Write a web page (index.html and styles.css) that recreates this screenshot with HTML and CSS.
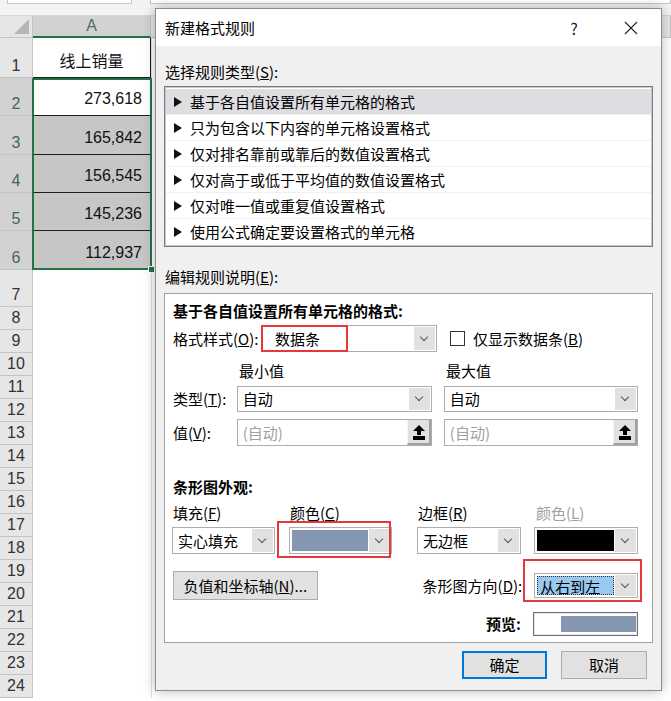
FILE: index.html
```html
<!DOCTYPE html>
<html lang="zh-CN">
<head>
  <meta charset="UTF-8" />
  <title>新建格式规则</title>
  <link rel="stylesheet" href="styles.css">
</head>
<body>
  <div class="sheet">
    <div class="topbar">
      <span class="namebox"></span>
      <span class="formula"></span>
    </div>

    <div class="grid">
      <div class="corner"><span class="corner-tri"></span></div>
      <div class="col-head active">A</div>
      <div class="col-head"></div>

      <div class="row-head">1</div><div class="cell a head-cell">线上销量</div><div class="cell b"></div>
      <div class="row-head sel">2</div><div class="cell a num">273,618</div><div class="cell b"></div>
      <div class="row-head sel">3</div><div class="cell a num shade">165,842</div><div class="cell b"></div>
      <div class="row-head sel">4</div><div class="cell a num shade">156,545</div><div class="cell b"></div>
      <div class="row-head sel">5</div><div class="cell a num shade">145,236</div><div class="cell b"></div>
      <div class="row-head sel">6</div><div class="cell a num shade">112,937</div><div class="cell b"></div>
      <div class="row-head">7</div><div class="cell"></div><div class="cell b"></div>
      <div class="row-head">8</div><div class="cell"></div><div class="cell b"></div>
      <div class="row-head">9</div><div class="cell"></div><div class="cell b"></div>
      <div class="row-head">10</div><div class="cell"></div><div class="cell b"></div>
      <div class="row-head">11</div><div class="cell"></div><div class="cell b"></div>
      <div class="row-head">12</div><div class="cell"></div><div class="cell b"></div>
      <div class="row-head">13</div><div class="cell"></div><div class="cell b"></div>
      <div class="row-head">14</div><div class="cell"></div><div class="cell b"></div>
      <div class="row-head">15</div><div class="cell"></div><div class="cell b"></div>
      <div class="row-head">16</div><div class="cell"></div><div class="cell b"></div>
      <div class="row-head">17</div><div class="cell"></div><div class="cell b"></div>
      <div class="row-head">18</div><div class="cell"></div><div class="cell b"></div>
      <div class="row-head">19</div><div class="cell"></div><div class="cell b"></div>
      <div class="row-head">20</div><div class="cell"></div><div class="cell b"></div>
      <div class="row-head">21</div><div class="cell"></div><div class="cell b"></div>
      <div class="row-head">22</div><div class="cell"></div><div class="cell b"></div>
      <div class="row-head">23</div><div class="cell"></div><div class="cell b"></div>
      <div class="row-head">24</div><div class="cell"></div><div class="cell b"></div>

      <div class="selection"><span class="fill-handle"></span></div>
    </div>
  </div>

  <div class="dialog">
    <div class="titlebar">
      <span class="title">新建格式规则</span>
      <span class="title-btn help">?</span>
      <span class="title-btn close">
        <svg width="14" height="14" viewBox="0 0 14 14"><path d="M1 1 L13 13 M13 1 L1 13" stroke="#222" stroke-width="1.1" fill="none"/></svg>
      </span>
    </div>

    <div class="body">
      <div class="section-label">选择规则类型(<u>S</u>):</div>
      <div class="rule-list">
        <div class="rule-item current"><span class="tri"></span>基于各自值设置所有单元格的格式</div>
        <div class="rule-item"><span class="tri"></span>只为包含以下内容的单元格设置格式</div>
        <div class="rule-item"><span class="tri"></span>仅对排名靠前或靠后的数值设置格式</div>
        <div class="rule-item"><span class="tri"></span>仅对高于或低于平均值的数值设置格式</div>
        <div class="rule-item"><span class="tri"></span>仅对唯一值或重复值设置格式</div>
        <div class="rule-item last"><span class="tri"></span>使用公式确定要设置格式的单元格</div>
      </div>

      <div class="section-label second">编辑规则说明(<u>E</u>):</div>
      <div class="rule-edit">
        <div class="edit-title">基于各自值设置所有单元格的格式:</div>

        <div class="row style-row">
          <span class="lbl w-style">格式样式(<u>O</u>):</span>
          <div class="select w-175 h-27">
            <span class="select-text wide-pad">数据条</span>
            <span class="arrow"></span>
          </div>
          <span class="checkbox"></span>
          <span class="lbl">仅显示数据条(<u>B</u>)</span>
        </div>

        <div class="row minmax-row">
          <span class="lbl w-min">最小值</span>
          <span class="lbl">最大值</span>
        </div>

        <div class="row type-row">
          <span class="lbl w-64">类型(<u>T</u>):</span>
          <div class="select w-196 h-26">
            <span class="select-text">自动</span>
            <span class="arrow"></span>
          </div>
          <div class="select w-195 h-26 gap-12">
            <span class="select-text">自动</span>
            <span class="arrow"></span>
          </div>
        </div>

        <div class="row value-row">
          <span class="lbl w-64">值(<u>V</u>):</span>
          <div class="input w-196 h-27">
            <span class="input-text">(自动)</span>
            <span class="ref-btn"></span>
          </div>
          <div class="input w-195 h-27 gap-12">
            <span class="input-text">(自动)</span>
            <span class="ref-btn"></span>
          </div>
        </div>

        <div class="edit-title bar-title">条形图外观:</div>

        <div class="row look-labels">
          <span class="lbl w-117">填充(<u>F</u>)</span>
          <span class="lbl w-128">颜色(<u>C</u>)</span>
          <span class="lbl w-118">边框(<u>R</u>)</span>
          <span class="lbl disabled">颜色(<u>L</u>)</span>
        </div>

        <div class="row look-row">
          <div class="select w-103 h-27 pull-1">
            <span class="select-text">实心填充</span>
            <span class="arrow"></span>
          </div>
          <div class="select w-104 h-27 gap-14">
            <span class="swatch blue"></span>
            <span class="arrow"></span>
          </div>
          <div class="select w-104 h-27 gap-25">
            <span class="select-text">无边框</span>
            <span class="arrow"></span>
          </div>
          <div class="select w-105 h-27 gap-13">
            <span class="swatch black"></span>
            <span class="arrow"></span>
          </div>
        </div>

        <div class="row axis-row">
          <button class="btn axis-btn">负值和坐标轴(<u>N</u>)...</button>
          <span class="lbl dir-lbl">条形图方向(<u>D</u>):</span>
          <div class="select w-104 h-25">
            <span class="picked">从右到左</span>
            <span class="arrow"></span>
          </div>
        </div>

        <div class="row preview-row">
          <span class="lbl bold">预览:</span>
          <div class="preview"><span class="preview-bar"></span></div>
        </div>
      </div>

      <div class="footer">
        <button class="btn ok">确定</button>
        <button class="btn">取消</button>
      </div>
    </div>

    <span class="mark mark-style"></span>
    <span class="mark mark-color"></span>
    <span class="mark mark-dir"></span>
  </div>
</body>
</html>
```

FILE: styles.css
```css
* {
  margin: 0;
  padding: 0;
  box-sizing: border-box;
}

body {
  width: 671px;
  height: 701px;
  overflow: hidden;
  position: relative;
  background: #ffffff;
  font-family: "Liberation Sans", "Noto Sans CJK SC", sans-serif;
}

/* ---------- spreadsheet ---------- */

.topbar {
  height: 16px;
  background: #f3f3f3;
  position: relative;
  border-bottom: 1px solid #d6d6d6;
}

.namebox,
.formula {
  position: absolute;
  top: 0;
  height: 4px;
  background: #fff;
  border: 1px solid #c6c6c6;
  border-top: none;
}

.namebox {
  left: 7px;
  width: 125px;
}

.formula {
  left: 150px;
  right: 0;
}

.grid {
  position: relative;
  display: grid;
  grid-template-columns: 33px 118px 1fr;
  grid-template-rows: 22px 40px 38px 39px 38px 38px 39px 37px repeat(18, 23px);
}

.corner {
  background: #e6e6e6;
  border-right: 1px solid #c4c4c4;
  border-bottom: 1px solid #c4c4c4;
  position: relative;
}

.corner-tri {
  position: absolute;
  right: 3px;
  bottom: 3px;
  width: 15px;
  height: 15px;
  background: #b6b6b6;
  clip-path: polygon(100% 0, 100% 100%, 0 100%);
}

.col-head {
  background: #e6e6e6;
  border-right: 1px solid #c4c4c4;
  border-bottom: 1px solid #c4c4c4;
  font-size: 16px;
  color: #444;
  display: flex;
  align-items: center;
  justify-content: center;
}

.col-head.active {
  background: #d2d2d2;
  color: #4c6e5a;
  border-bottom: 2px solid #217346;
}

.row-head {
  background: #e6e6e6;
  border-right: 1px solid #c4c4c4;
  border-bottom: 1px solid #c4c4c4;
  font-size: 16px;
  line-height: 20px;
  color: #333;
  display: flex;
  align-items: flex-end;
  justify-content: center;
  padding-bottom: 1px;
}

.row-head.sel {
  background: #d2d2d2;
  color: #3e6a52;
}

.cell {
  background: #fff;
}

.cell.a {
  border-right: 1px solid #1e1e1e;
  border-bottom: 1px solid #1e1e1e;
  font-size: 16px;
  line-height: 20px;
  display: flex;
  align-items: flex-end;
}

.cell.b {
  border-left: 1px solid #e0e0e0;
}

.head-cell {
  justify-content: center;
  font-family: "Noto Sans CJK SC", sans-serif;
  font-size: 18px;
  padding-bottom: 7px;
  color: #111;
}

.num {
  justify-content: flex-end;
  padding-right: 8px;
  padding-bottom: 6px;
  color: #111;
}

.shade {
  background: #c6c6c6;
}

.selection {
  position: absolute;
  left: 32px;
  top: 62px;
  width: 120px;
  height: 192px;
  border: 2px solid #217346;
}

.fill-handle {
  position: absolute;
  right: -5px;
  bottom: -5px;
  width: 7px;
  height: 7px;
  background: #217346;
  border: 1px solid #fff;
}

/* ---------- dialog ---------- */

.dialog {
  position: absolute;
  left: 155px;
  top: 8px;
  width: 507px;
  height: 683px;
  background: #f0f0f0;
  border: 1px solid #8c8c8c;
  box-shadow: 0 0 12px rgba(0, 0, 0, 0.28);
  font-family: "Noto Sans CJK SC", sans-serif;
  font-size: 15px;
  color: #000;
  display: flex;
  flex-direction: column;
}

.titlebar {
  height: 37px;
  background: #fff;
  display: flex;
  align-items: center;
  padding-left: 9px;
  padding-right: 7px;
}

.title {
  flex: 1;
  line-height: 20px;
}

.title-btn {
  width: 46px;
  height: 37px;
  display: flex;
  align-items: center;
  justify-content: center;
  color: #222;
}

.help {
  font-size: 16px;
  margin-right: 11px;
}

.body {
  flex: 1;
  padding: 0 8px 12px 8px;
  display: flex;
  flex-direction: column;
}

.section-label {
  margin-top: 16px;
  height: 20px;
  line-height: 20px;
  padding-left: 1px;
}

.section-label.second {
  margin-top: 20px;
}

.rule-list {
  margin-top: 4px;
  height: 161px;
  background: #fff;
  border: 1px solid #7a7a7a;
  box-shadow: inset 0 0 0 1px #c8c8c8;
  padding: 2px 1px 0 1px;
}

.rule-item {
  height: 26px;
  display: flex;
  align-items: center;
  padding-left: 8px;
  border-bottom: 1px solid #f0f0f0;
  line-height: 20px;
}

.rule-item.current {
  background: #dddde2;
}

.rule-item.last {
  border-bottom: none;
}

.tri {
  width: 0;
  height: 0;
  border-top: 5px solid transparent;
  border-bottom: 5px solid transparent;
  border-left: 8px solid #111;
  margin-right: 8px;
}

.rule-edit {
  margin-top: 6px;
  height: 350px;
  background: #fff;
  border: 1px solid #a0a0a0;
  padding: 7px 14px 0 8px;
}

.edit-title {
  font-weight: bold;
  height: 20px;
  line-height: 20px;
}

.bar-title {
  margin-top: 31px;
}

.row {
  display: flex;
  align-items: center;
}

.lbl {
  line-height: 20px;
  white-space: nowrap;
}

.lbl.disabled {
  color: #a0a0a0;
}

.lbl.bold {
  font-weight: bold;
}

.style-row { margin-top: 4px; }
.minmax-row { margin-top: 9px; height: 20px; }
.type-row { margin-top: 5px; }
.value-row { margin-top: 7px; }
.look-labels { margin-top: 6px; height: 20px; }
.look-row { margin-top: 4px; }
.axis-row { margin-top: 17px; }
.preview-row {
  margin-top: 12px;
  justify-content: flex-end;
}

.w-style { width: 89px; }
.w-min { width: 273px; padding-left: 66px; }
.w-64 { width: 64px; }
.w-117 { width: 117px; }
.w-128 { width: 128px; }
.w-118 { width: 118px; }

.w-103 { width: 103px; }
.w-104 { width: 104px; }
.w-105 { width: 105px; }
.w-175 { width: 175px; }
.w-195 { width: 195px; }
.w-196 { width: 196px; }
.h-25 { height: 25px; }
.h-26 { height: 26px; }
.h-27 { height: 27px; }
.gap-12 { margin-left: 12px; }
.gap-13 { margin-left: 13px; }
.gap-14 { margin-left: 14px; }
.gap-25 { margin-left: 25px; }
.pull-1 { margin-left: -1px; }

.select {
  display: flex;
  background: #fff;
  border: 1px solid #adadad;
}

.select-text {
  flex: 1;
  padding-left: 5px;
  line-height: 20px;
  display: flex;
  align-items: center;
}

.select-text.wide-pad {
  padding-left: 12px;
}

.arrow {
  width: 21px;
  margin: 1px;
  background: #e1e1e1;
  position: relative;
}

.arrow::after {
  content: "";
  position: absolute;
  left: 7px;
  top: 50%;
  width: 5px;
  height: 5px;
  margin-top: -5px;
  border-right: 1px solid #555;
  border-bottom: 1px solid #555;
  transform: rotate(45deg);
}

.swatch {
  flex: 1;
  margin: 2px 0 2px 2px;
}

.swatch.blue { background: #8496b0; }
.swatch.black { background: #000; }

.picked {
  flex: 1;
  margin: 2px 0 2px 2px;
  background: #99c9ef;
  border: 1px dotted #333;
  line-height: 19px;
  padding-left: 2px;
}

.checkbox {
  width: 15px;
  height: 15px;
  border: 1px solid #333;
  background: #fff;
  margin-left: 13px;
  margin-right: 8px;
}

.input {
  display: flex;
  background: #fff;
  border: 1px solid #adadad;
}

.input-text {
  flex: 1;
  padding-left: 5px;
  color: #a0a0a0;
  display: flex;
  align-items: center;
}

.ref-btn {
  width: 24px;
  background: #e1e1e1;
  border-left: 1px solid #f4f4f4;
  border-right: 2px solid #a0a0a0;
  border-bottom: 2px solid #a0a0a0;
  position: relative;
}

/* up arrow with a base line */
.ref-btn::before {
  content: "";
  position: absolute;
  left: 5px;
  top: 5px;
  width: 0;
  height: 0;
  border-left: 6px solid transparent;
  border-right: 6px solid transparent;
  border-bottom: 6px solid #000;
}

.ref-btn::after {
  content: "";
  position: absolute;
  left: 9px;
  top: 11px;
  width: 4px;
  height: 4px;
  background: #000;
  box-shadow: -4px 5px 0 0 #000, 0 5px 0 0 #000, 4px 5px 0 0 #000;
}

.btn {
  font-family: "Noto Sans CJK SC", sans-serif;
  font-size: 15px;
  color: #000;
  background: #e1e1e1;
  border: 1px solid #adadad;
  line-height: 20px;
}

.axis-btn {
  width: 145px;
  height: 29px;
}

.dir-lbl {
  margin-left: 105px;
  width: 112px;
}

.preview {
  width: 105px;
  height: 24px;
  margin-left: 12px;
  border: 1px solid #6f6f6f;
  box-shadow: inset 0 0 0 1px #e6e6e6;
  background: #fff;
  padding: 3px 1px 3px 27px;
}

.preview-bar {
  display: block;
  height: 100%;
  background: #8496b0;
}

.footer {
  margin-top: 8px;
  display: flex;
  justify-content: flex-end;
  gap: 14px;
  padding-right: 6px;
}

.footer .btn {
  width: 86px;
  height: 28px;
}

.footer .btn.ok {
  width: 85px;
  border: 2px solid #0078d7;
}

/* red highlight marks drawn over the form */
.mark {
  position: absolute;
  border: 2px solid #e5383b;
}

.mark-style {
  left: 105px;
  top: 316px;
  width: 87px;
  height: 27px;
}

.mark-color {
  left: 121px;
  top: 512px;
  width: 114px;
  height: 37px;
}

.mark-dir {
  left: 367px;
  top: 550px;
  width: 119px;
  height: 43px;
}
```
